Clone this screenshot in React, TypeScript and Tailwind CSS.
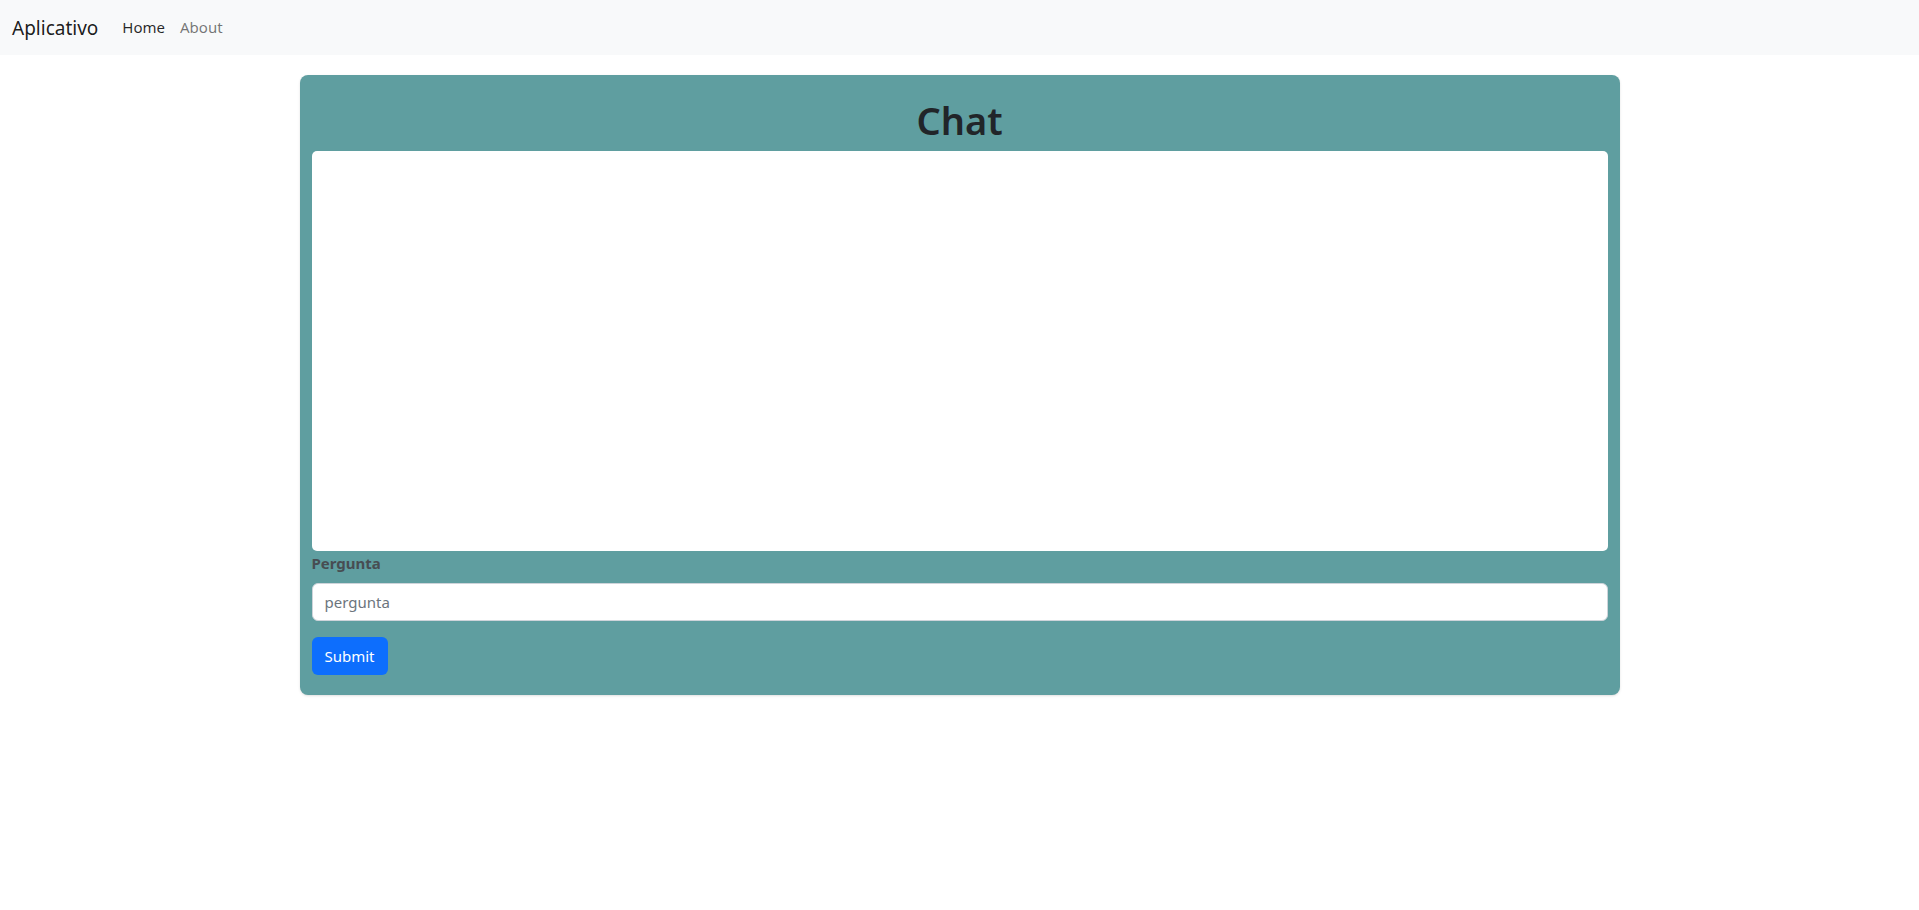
export default function App() {
  return (
    <div className="min-h-[910px] bg-white font-['Noto_Sans','Open_Sans',sans-serif] text-[#212529]">
      <nav className="flex h-[55px] items-center bg-[#f8f9fa] px-3">
        <a className="mr-[24px] text-[19px] leading-[30px] text-black/90">Aplicativo</a>
        <div className="flex items-center gap-[15px] text-[15px] font-normal">
          <a className="text-black/85">Home</a>
          <a className="text-black/55">About</a>
        </div>
      </nav>

      <main className="flex justify-center pt-5">
        <div className="w-[1320px] rounded-lg bg-[#5f9ea0] px-3 pb-5 shadow-sm">
          <h1 className="pt-[21px] pb-[7px] text-center text-[38px] leading-[48px] font-semibold text-[#212529]">
            Chat
          </h1>
          <div className="h-[400px] rounded-[5px] bg-white" />
          <label className="mb-2 block text-[15px] leading-6 font-bold text-[#474d52]">
            Pergunta
          </label>
          <input
            placeholder="pergunta"
            className="block h-[38px] w-full rounded-[6px] border border-[#ced4da] bg-white px-3 text-[15px] text-[#212529] placeholder:text-[#6c757d] outline-none"
          />
          <button className="mt-4 h-[38px] w-[76px] rounded-[6px] bg-[#0d6efd] text-[15px] text-white">
            Submit
          </button>
        </div>
      </main>
    </div>
  );
}
